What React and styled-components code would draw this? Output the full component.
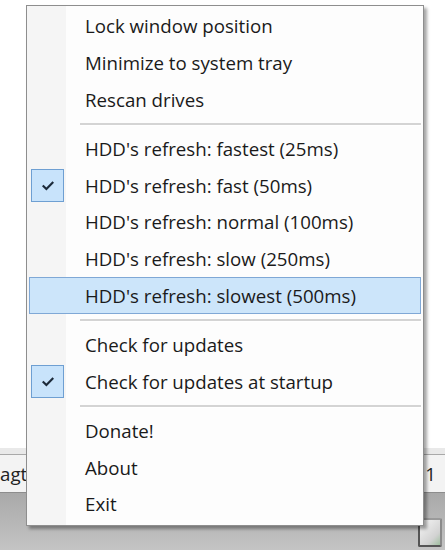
import React from 'react'
import styled, { createGlobalStyle } from 'styled-components'

const GlobalStyle = createGlobalStyle`
  html, body {
    margin: 0;
    padding: 0;
    width: 445px;
    height: 550px;
    overflow: hidden;
    background: #ffffff;
  }
  * {
    box-sizing: border-box;
  }
`

const groups = [
  [
    { label: 'Lock window position' },
    { label: 'Minimize to system tray' },
    { label: 'Rescan drives' },
  ],
  [
    { label: "HDD's refresh: fastest (25ms)" },
    { label: "HDD's refresh: fast (50ms)", checked: true },
    { label: "HDD's refresh: normal (100ms)" },
    { label: "HDD's refresh: slow (250ms)" },
    { label: "HDD's refresh: slowest (500ms)", hover: true },
  ],
  [
    { label: 'Check for updates' },
    { label: 'Check for updates at startup', checked: true },
  ],
  [{ label: 'Donate!' }, { label: 'About' }, { label: 'Exit' }],
]

function CheckMark() {
  return (
    <svg width="12" height="10" viewBox="0 0 12 10">
      <path
        d="M1.5 5.2 L4.4 8 L10.5 1.8"
        fill="none"
        stroke="#1c2a3a"
        strokeWidth="2.2"
        strokeLinecap="square"
      />
    </svg>
  )
}

export default function App() {
  return (
    <>
      <GlobalStyle />
      <Screen>
        <Window />
        <StatusStrip />
        <StatusBar>
          <StatusText>agtl</StatusText>
          <StatusText>1</StatusText>
        </StatusBar>
        <Taskbar>
          <TrayIcon />
        </Taskbar>

        <Menu>
          {groups.map((items, gi) => (
            <React.Fragment key={gi}>
              {gi > 0 && <Separator />}
              {items.map((item) => (
                <Item key={item.label} $hover={item.hover}>
                  <Gutter>
                    {item.checked && (
                      <CheckBox>
                        <CheckMark />
                      </CheckBox>
                    )}
                  </Gutter>
                  <Label>{item.label}</Label>
                </Item>
              ))}
            </React.Fragment>
          ))}
        </Menu>
      </Screen>
    </>
  )
}

const Screen = styled.div`
  position: relative;
  width: 445px;
  height: 550px;
  display: flex;
  flex-direction: column;
  font-family: 'Open Sans', 'Noto Sans', sans-serif;
`

const Window = styled.div`
  height: 448px;
  background: #ffffff;
`

const StatusStrip = styled.div`
  height: 7px;
  background: #e9e9e9;
  border-bottom: 1px solid #a9a9a9;
`

const StatusBar = styled.div`
  height: 38px;
  background: #f3f3f3;
  border-bottom: 1px solid #8d8d8d;
  display: flex;
  align-items: center;
  justify-content: space-between;
  padding: 0 9px 0 0;
`

const StatusText = styled.span`
  font-size: 18.7px;
  color: #222;
`

const Taskbar = styled.div`
  flex: 1;
  background: linear-gradient(#a9a9a9, #b9b9b9 60%, #c4c4c4);
  display: flex;
  justify-content: flex-end;
  align-items: flex-end;
  padding: 0 3px 3px 0;
`

const TrayIcon = styled.div`
  flex: 0 0 24px;
  width: 24px;
  height: 29px;
  border: 2px solid #555555;
  border-top-color: #9a9a9a;
  border-right-color: #8a8a8a;
  border-radius: 2px;
  background: linear-gradient(135deg, #f6f6f6, #d2d2d2 70%, #9fbf9f);
`

const Menu = styled.div`
  position: absolute;
  left: 26px;
  top: 5px;
  width: 398px;
  padding: 2px;
  background: linear-gradient(to right, #f5f5f5 0, #f5f5f5 39px, #fdfdfd 39px);
  border: 1px solid #8e8e8e;
  box-shadow: 3px 3px 3px rgba(0, 0, 0, 0.35);
  display: flex;
  flex-direction: column;
`

const Item = styled.div`
  height: 36.7px;
  display: flex;
  align-items: center;
  border: 1px solid ${(p) => (p.$hover ? '#7fa8d6' : 'transparent')};
  background: ${(p) => (p.$hover ? '#cce5fa' : 'transparent')};
`

const Gutter = styled.div`
  width: 55px;
  height: 100%;
  display: flex;
  align-items: center;
  padding-left: 1px;
`

const CheckBox = styled.div`
  width: 33px;
  height: 33px;
  background: #c8e3fb;
  border: 1px solid #6e9fd2;
  display: flex;
  align-items: center;
  justify-content: center;
`

const Label = styled.span`
  font-size: 18.7px;
  color: #1a1a1a;
  white-space: nowrap;
  margin-top: -1px;
`

const Separator = styled.div`
  height: 12.6px;
  display: flex;
  align-items: center;
  padding-left: 51px;

  &::after {
    content: '';
    flex: 1;
    height: 2px;
    background: #d4d4d4;
    border-bottom: 1px solid #ffffff;
  }
`
